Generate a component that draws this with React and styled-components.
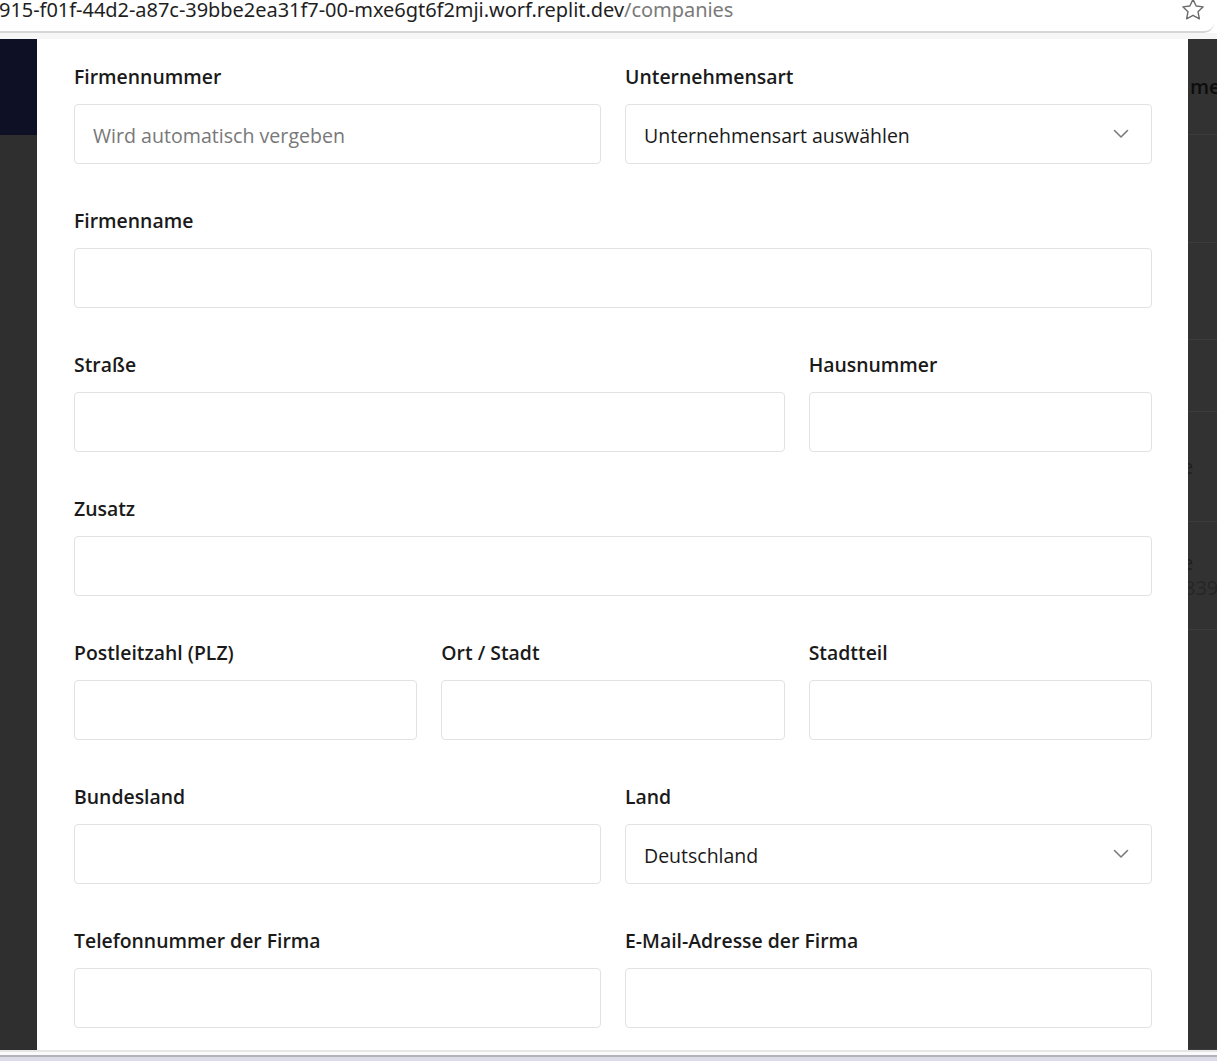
import React from 'react';
import styled, { createGlobalStyle } from 'styled-components';

const GlobalStyle = createGlobalStyle`
  html, body {
    margin: 0;
    padding: 0;
    overflow: hidden;
    background: #ffffff;
  }
  * { box-sizing: border-box; }
`;

const FONT = `"Open Sans", "Noto Sans", sans-serif`;

const fields = [
  { label: 'Firmennummer', span: 3, placeholder: 'Wird automatisch vergeben' },
  { label: 'Unternehmensart', span: 3, select: 'Unternehmensart auswählen' },
  { label: 'Firmenname', span: 6 },
  { label: 'Straße', span: 4 },
  { label: 'Hausnummer', span: 2 },
  { label: 'Zusatz', span: 6 },
  { label: 'Postleitzahl (PLZ)', span: 2 },
  { label: 'Ort / Stadt', span: 2 },
  { label: 'Stadtteil', span: 2 },
  { label: 'Bundesland', span: 3 },
  { label: 'Land', span: 3, select: 'Deutschland' },
  { label: 'Telefonnummer der Firma', span: 3 },
  { label: 'E-Mail-Adresse der Firma', span: 3 },
];

const backRows = [
  { h: 96, text: 'me', dark: true },
  { h: 108 },
  { h: 97 },
  { h: 72 },
  { h: 110, text: 'e' },
  { h: 108, text: 'e', sub: '839' },
  { h: 420 },
];

function Chevron() {
  return (
    <svg width="16" height="10" viewBox="0 0 16 10" fill="none">
      <path d="M1.5 1.5 L8 8 L14.5 1.5" stroke="#7a7a7a" strokeWidth="1.6" strokeLinecap="round" strokeLinejoin="round" />
    </svg>
  );
}

function Star() {
  return (
    <svg width="26" height="26" viewBox="0 0 24 24" fill="none">
      <path
        d="M12 2.2 L14.9 8.3 L21.4 9.1 L16.6 13.6 L17.9 20.1 L12 16.9 L6.1 20.1 L7.4 13.6 L2.6 9.1 L9.1 8.3 Z"
        stroke="#6b6b6b"
        strokeWidth="1.3"
        strokeLinejoin="round"
      />
    </svg>
  );
}

export default function App() {
  return (
    <Frame>
      <GlobalStyle />
      <BrowserBar>
        <Url>
          915-f01f-44d2-a87c-39bbe2ea31f7-00-mxe6gt6f2mji.worf.replit.dev<UrlPath>/companies</UrlPath>
        </Url>
        <StarBox><Star /></StarBox>
      </BrowserBar>
      <BarGap />
      <Viewport>
        <LeftBackdrop>
          <NavyBlock />
        </LeftBackdrop>
        <Modal>
          <FormGrid>
            {fields.map((f) => (
              <Field key={f.label} span={f.span}>
                <Label>{f.label}</Label>
                {f.select ? (
                  <SelectBox>
                    <span>{f.select}</span>
                    <Chevron />
                  </SelectBox>
                ) : (
                  <Input placeholder={f.placeholder || ''} readOnly={!!f.placeholder} />
                )}
              </Field>
            ))}
          </FormGrid>
        </Modal>
        <RightBackdrop>
          {backRows.map((r, i) => (
            <BackRow key={i} h={r.h}>
              {r.text && <BackText dark={r.dark}>{r.text}</BackText>}
              {r.sub && <BackSub>{r.sub}</BackSub>}
            </BackRow>
          ))}
        </RightBackdrop>
      </Viewport>
      <BottomEdge />
    </Frame>
  );
}

const Frame = styled.div`
  width: 1217px;
  height: 1061px;
  display: flex;
  flex-direction: column;
  overflow: hidden;
  font-family: ${FONT};
`;

const BrowserBar = styled.div`
  height: 33px;
  flex: none;
  display: flex;
  align-items: flex-start;
  justify-content: space-between;
  background: #ffffff;
  border-bottom: 2px solid #d6d6d6;
  border-bottom-right-radius: 10px;
  margin-right: 3px;
`;

const Url = styled.div`
  font-family: "Noto Sans", "Open Sans", sans-serif;
  font-size: 20px;
  line-height: 22px;
  color: #1f1f1f;
  white-space: nowrap;
  margin-left: -1px;
  margin-top: -1px;
  letter-spacing: -0.04px;
`;

const UrlPath = styled.span`
  color: #7a7a7a;
`;

const StarBox = styled.div`
  margin-top: -3px;
  margin-right: 8px;
  display: flex;
`;

const BarGap = styled.div`
  height: 6px;
  flex: none;
  background: #f6f6f6;
`;

const Viewport = styled.div`
  flex: none;
  height: 1011px;
  display: flex;
`;

const LeftBackdrop = styled.div`
  width: 37px;
  flex: none;
  background: #2f2f2f;
`;

const NavyBlock = styled.div`
  height: 96px;
  background: #0e1126;
`;

const Modal = styled.div`
  width: 1151px;
  flex: none;
  background: #ffffff;
  padding: 24px 36px 0 37px;
  overflow: hidden;
`;

const FormGrid = styled.div`
  display: grid;
  grid-template-columns: repeat(6, 1fr);
  column-gap: 24px;
  row-gap: 43px;
`;

const Field = styled.div`
  grid-column: span ${(p) => p.span};
  display: flex;
  flex-direction: column;
  gap: 13px;
`;

const Label = styled.label`
  font-size: 19.4px;
  line-height: 28px;
  font-weight: 600;
  color: #1a1a1a;
`;

const Input = styled.input`
  height: 60px;
  border: 1px solid #e2e2e2;
  border-radius: 4px;
  padding: 2px 18px 0;
  font-family: ${FONT};
  font-size: 19.6px;
  color: #1a1a1a;
  background: #ffffff;
  outline: none;
  &::placeholder {
    color: #787878;
  }
`;

const SelectBox = styled.div`
  height: 60px;
  border: 1px solid #e2e2e2;
  border-radius: 4px;
  padding: 2px 22px 0 18px;
  display: flex;
  align-items: center;
  justify-content: space-between;
  font-size: 19.5px;
  color: #1a1a1a;
  svg {
    margin-top: -2px;
  }
`;

const RightBackdrop = styled.div`
  flex: 1;
  background: #323232;
  display: flex;
  flex-direction: column;
  overflow: hidden;
`;

const BackRow = styled.div`
  height: ${(p) => p.h}px;
  flex: none;
  border-bottom: 1px solid #3c3c3c;
  display: flex;
  flex-direction: column;
  justify-content: center;
  padding-left: 2px;
  white-space: nowrap;
`;

const BackText = styled.div`
  font-size: 20px;
  line-height: 24px;
  color: ${(p) => (p.dark ? '#0d0d0d' : '#1e1e1e')};
  font-weight: ${(p) => (p.dark ? 600 : 400)};
  margin-left: ${(p) => (p.dark ? '0' : '-8px')};
`;

const BackSub = styled.div`
  font-size: 20px;
  line-height: 26px;
  color: #262626;
  margin-left: -6px;
`;

const BottomEdge = styled.div`
  flex: 1;
  border-top: 2px solid #e6e6e6;
  background: linear-gradient(to bottom, #fafafa 0 3px, #b2b2ba 3px 5px, #dcdce8 5px);
`;
